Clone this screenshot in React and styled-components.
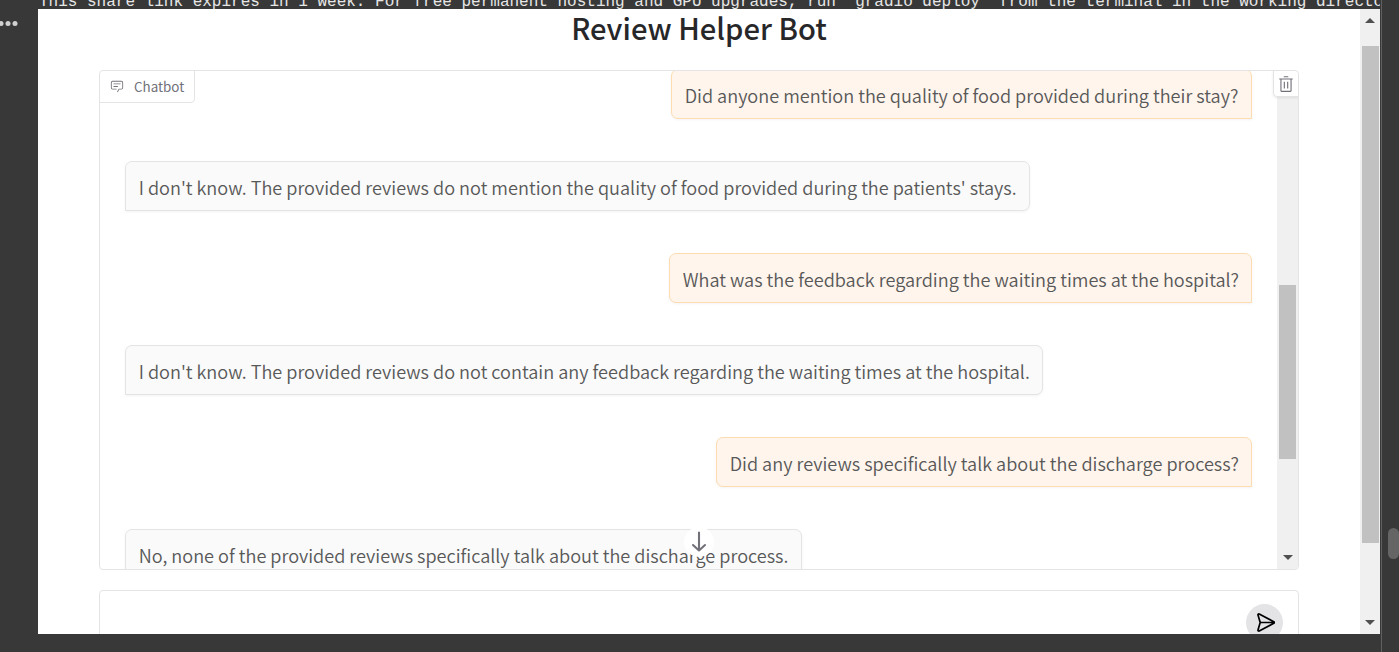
import React from 'react';
import styled, { createGlobalStyle } from 'styled-components';

const GlobalStyle = createGlobalStyle`
  * { box-sizing: border-box; }
  body {
    margin: 0;
    overflow: hidden;
    background: #383838;
    font-family: "Noto Sans CJK SC", "Noto Sans", sans-serif;
  }
`;

const Notebook = styled.div`
  display: flex;
  height: 652px;
  overflow: hidden;
  background: #383838;
`;

const Gutter = styled.aside`
  flex: 0 0 38px;
  padding-top: 21px;
`;

const Dots = styled.svg`
  display: block;
`;

const Output = styled.main`
  flex: 0 0 1342px;
  min-width: 0;
  display: flex;
  flex-direction: column;
`;

const Console = styled.div`
  flex: 0 0 9px;
  display: flex;
  align-items: flex-end;
  overflow: hidden;
  padding-left: 1px;
  color: #e6e6e6;
  font: 16px/18px "Liberation Mono", monospace;
  white-space: pre;
`;

const ConsoleLine = styled.span`
  flex: none;
  margin-bottom: -2px;
`;

const Frame = styled.section`
  flex: 0 0 625px;
  display: flex;
  overflow: hidden;
  background: #fff;
`;

const Page = styled.div`
  flex: 1;
  min-width: 0;
  display: flex;
  flex-direction: column;
  padding: 0 61px;
`;

const Title = styled.h1`
  flex: 0 0 61px;
  margin: 0;
  color: #27272a;
  font-size: 29.2px;
  font-weight: 500;
  line-height: 37px;
  text-align: center;
  white-space: nowrap;
`;

const Chat = styled.div`
  position: relative;
  flex: 0 0 500px;
  display: flex;
  overflow: hidden;
  border: 1px solid #e4e4e7;
  border-radius: 4px;
`;

const Label = styled.div`
  position: absolute;
  top: -1px;
  left: -1px;
  display: flex;
  align-items: center;
  gap: 10px;
  width: 96px;
  height: 33px;
  padding: 0 0 1px 10px;
  border: 1px solid #e4e4e7;
  border-radius: 4px 0 4px 0;
  background: #fff;
  color: #71717a;
  font-size: 13.4px;
  line-height: 20px;
`;

const ClearButton = styled.button`
  position: absolute;
  top: -1px;
  right: -1px;
  display: grid;
  place-items: center;
  width: 26px;
  height: 27px;
  padding: 0;
  border: 1px solid #e4e4e7;
  border-radius: 0 4px 0 4px;
  background: #fff;
  box-shadow: 0 1px 3px rgba(0, 0, 0, 0.08);
`;

const Messages = styled.div`
  flex: 1;
  min-width: 0;
  display: flex;
  flex-direction: column;
  gap: 42px;
  margin-top: -2px;
  padding: 0 25px;
`;

const Bubble = styled.div`
  flex: 0 0 50px;
  min-height: 0;
  align-self: ${(p) => (p.$user ? 'flex-end' : 'flex-start')};
  width: ${(p) => p.$width}px;
  padding: 3px 0 0 12.7px;
  border: 1px solid ${(p) => (p.$user ? '#fcdcb0' : '#e4e4e7')};
  border-radius: ${(p) => (p.$user ? '7px 7px 0 7px' : '7px 7px 7px 0')};
  background: ${(p) => (p.$user ? '#fff5ec' : '#fafafa')};
  box-shadow: 0 1px 3px rgba(0, 0, 0, 0.05);
  color: #585858;
  font-size: 18.115px;
  font-weight: 350;
  line-height: 45px;
  white-space: nowrap;
`;

const ScrollDown = styled.button`
  position: absolute;
  left: 584px;
  bottom: 12px;
  display: grid;
  place-items: center;
  width: 30px;
  height: 30px;
  padding: 0;
  border: 0;
  border-radius: 50%;
  background: #fff;
`;

const Scrollbar = styled.div`
  flex: 0 0 ${(p) => p.$width}px;
  display: flex;
  flex-direction: column;
  align-items: center;
  background: #f0f0f0;
`;

const Thumb = styled.div`
  width: 17px;
  height: ${(p) => p.$height}px;
  margin-top: ${(p) => p.$top}px;
  background: #c1c1c1;
`;

const Arrow = styled.svg`
  display: block;
  width: 10px;
  height: 5px;
  margin-top: ${(p) => p.$top}px;
  fill: #505050;
`;

const Composer = styled.div`
  flex: 0 0 62px;
  display: flex;
  justify-content: flex-end;
  margin-top: 20px;
  padding: 13px 15px 0 0;
  border: 1px solid #e4e4e7;
  border-radius: 4px;
`;

const SendButton = styled.button`
  display: grid;
  place-items: center;
  width: 37px;
  height: 37px;
  padding: 0;
  border: 0;
  border-radius: 50%;
  background: #e4e4e7;
`;

const PageRail = styled.aside`
  flex: 1;
  display: flex;
  align-items: flex-start;
  justify-content: flex-end;
  margin-left: 1px;
  padding-top: 528px;
  overflow: hidden;
  border-left: 1px solid #606060;
`;

const RailThumb = styled.div`
  flex: none;
  width: 11px;
  height: 31px;
  border-radius: 6px;
  background: #656565;
`;

const messages = [
  { user: true, width: 581, text: 'Did anyone mention the quality of food provided during their stay?' },
  { user: false, width: 905, text: "I don't know. The provided reviews do not mention the quality of food provided during the patients' stays." },
  { user: true, width: 583, text: 'What was the feedback regarding the waiting times at the hospital?' },
  { user: false, width: 918, text: "I don't know. The provided reviews do not contain any feedback regarding the waiting times at the hospital." },
  { user: true, width: 536, text: 'Did any reviews specifically talk about the discharge process?' },
  { user: false, width: 677, text: 'No, none of the provided reviews specifically talk about the discharge process.' },
];

const UpArrow = ({ top }) => (
  <Arrow $top={top} viewBox="0 0 10 5"><path d="M0 5 5 0l5 5z" /></Arrow>
);

const DownArrow = ({ top }) => (
  <Arrow $top={top} viewBox="0 0 10 5"><path d="M0 0h10L5 5z" /></Arrow>
);

const ChatIcon = () => (
  <svg width="14" height="14" viewBox="0 0 32 32" fill="#71717a">
    <path d="M17.74 30 16 29l4-7h6a2 2 0 0 0 2-2V8a2 2 0 0 0-2-2H6a2 2 0 0 0-2 2v12a2 2 0 0 0 2 2h9v2H6a4 4 0 0 1-4-4V8a4 4 0 0 1 4-4h20a4 4 0 0 1 4 4v12a4 4 0 0 1-4 4h-4.84Z" />
    <path d="M8 10h16v2H8zM8 16h10v2H8z" />
  </svg>
);

const TrashIcon = () => (
  <svg width="18" height="18" viewBox="0 0 32 32" fill="#71717a">
    <path d="M12 12h2v12h-2zM18 12h2v12h-2z" />
    <path d="M4 6v2h2v20a2 2 0 0 0 2 2h16a2 2 0 0 0 2-2V8h2V6Zm4 22V8h16v20ZM12 2h8v2h-8z" />
  </svg>
);

const DownIcon = () => (
  <svg width="16" height="22" viewBox="0 0 16 22" fill="none" stroke="#71717a" strokeWidth="2.1" strokeLinecap="round" strokeLinejoin="round">
    <path d="M8 1.5v18M2 14l6 5.5 6-5.5" />
  </svg>
);

const SendIcon = () => (
  <svg width="20" height="20" viewBox="0 0 20 20" fill="none" stroke="#000" strokeWidth="1.7" strokeLinejoin="round" strokeLinecap="round">
    <path d="M6 9.5h13M4.2 1 18.8 8.7a.9.9 0 0 1 0 1.6L4.2 18c-.7.3-1.4-.3-1.2-1L5.2 9.5 3 2c-.2-.7.5-1.3 1.2-1Z" />
  </svg>
);

export default function App() {
  return (
    <>
      <GlobalStyle />
      <Notebook>
        <Gutter>
          <Dots width="18" height="5" viewBox="0 0 18 5" fill="#d0d0d0">
            <circle cx="1" cy="2.5" r="2.5" />
            <circle cx="8" cy="2.5" r="2.5" />
            <circle cx="15" cy="2.5" r="2.5" />
          </Dots>
        </Gutter>
        <Output>
          <Console>
            <ConsoleLine>This share link expires in 1 week. For free permanent hosting and GPU upgrades, run `gradio deploy` from the terminal in the working directo</ConsoleLine>
          </Console>
          <Frame>
            <Page>
              <Title>Review Helper Bot</Title>
              <Chat>
                <Messages>
                  {messages.map((m) => (
                    <Bubble key={m.text} $user={m.user} $width={m.width}>{m.text}</Bubble>
                  ))}
                </Messages>
                <Scrollbar $width={21}>
                  <Thumb $top={214} $height={174} />
                  <DownArrow top={96} />
                </Scrollbar>
                <Label><ChatIcon />Chatbot</Label>
                <ClearButton aria-label="Clear"><TrashIcon /></ClearButton>
                <ScrollDown aria-label="Scroll to bottom"><DownIcon /></ScrollDown>
              </Chat>
              <Composer>
                <SendButton aria-label="Send"><SendIcon /></SendButton>
              </Composer>
            </Page>
            <Scrollbar $width={20}>
              <UpArrow top={9} />
              <Thumb $top={23} $height={497} />
              <DownArrow top={77} />
            </Scrollbar>
          </Frame>
        </Output>
        <PageRail><RailThumb /></PageRail>
      </Notebook>
    </>
  );
}
